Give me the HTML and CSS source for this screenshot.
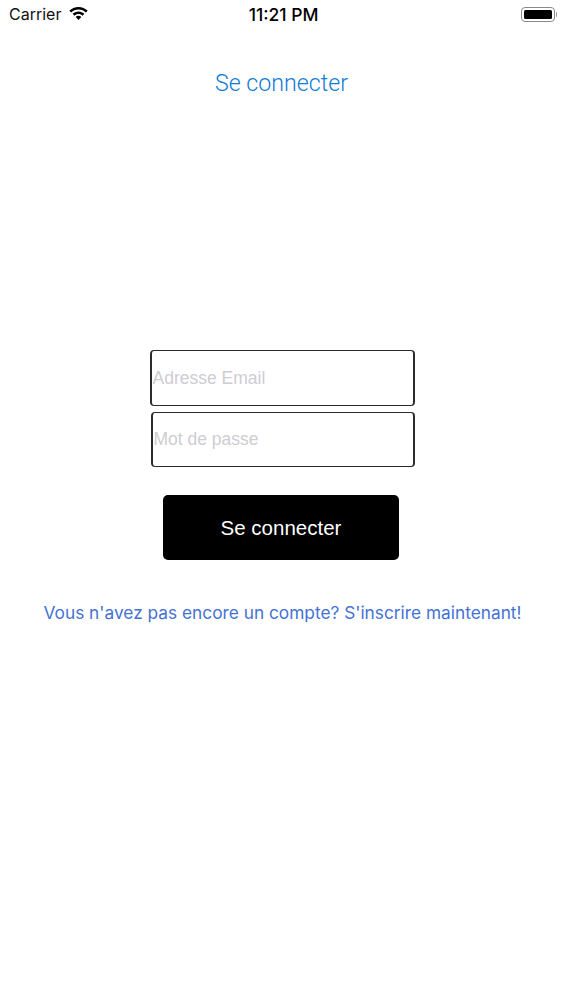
FILE: index.html
```html
<!DOCTYPE html>
<html lang="en">
<head>
    <meta charset="UTF-8">
    <meta name="viewport" content="width=device-width, initial-scale=1.0">
    <title>Se connecter</title>
    <link rel="stylesheet" href="styles.css">
</head>
<body>
    <div class="status-bar">
        <div class="status-left">
            <span class="carrier">Carrier</span>
            <svg class="wifi" width="19" height="14" viewBox="0 0 19 14">
                <path d="M9.5 0C5.9 0 2.7 1.4 .3 3.7l1.8 1.9C4 3.7 6.6 2.6 9.5 2.6s5.5 1.1 7.4 3l1.8-1.9C16.3 1.4 13.1 0 9.5 0z"/>
                <path d="M9.5 4.4c-2.3 0-4.4.9-5.9 2.4l1.8 1.9c1.1-1 2.5-1.7 4.1-1.7s3 .7 4.1 1.7l1.8-1.9c-1.5-1.5-3.6-2.4-5.9-2.4z"/>
                <path d="M9.5 8.8c-1.1 0-2 .4-2.8 1.1l2.8 3.1 2.8-3.1c-.8-.7-1.7-1.1-2.8-1.1z"/>
            </svg>
        </div>
        <span class="clock">11:21 PM</span>
        <div class="battery">
            <div class="battery-body"><div class="battery-level"></div></div>
            <div class="battery-cap"></div>
        </div>
    </div>

    <h1 class="page-title">Se connecter</h1>

    <form class="login-form">
        <input class="field field-email" type="text" placeholder="Adresse Email">
        <input class="field field-password" type="password" placeholder="Mot de passe">
        <button class="login-button" type="button">Se connecter</button>
    </form>

    <a class="signup-link" href="#">Vous n'avez pas encore un compte? S'inscrire maintenant!</a>
</body>
</html>
```

FILE: styles.css
```css
body {
    font-family: "Liberation Sans", Arial, sans-serif;
    margin: 0;
    background-color: #ffffff;
    color: #000000;
}

.status-bar {
    display: flex;
    align-items: center;
    justify-content: space-between;
    position: relative;
    height: 28px;
    padding: 0 6px 0 9px;
    font-family: Inter, "Liberation Sans", sans-serif;
    font-size: 16px;
}

.status-left {
    display: flex;
    align-items: center;
    gap: 8px;
}

.carrier {
    color: #111111;
}

.wifi {
    fill: #000000;
}

.clock {
    position: absolute;
    left: 4px;
    right: 0;
    text-align: center;
    font-weight: 500;
    font-size: 17.5px;
}

.battery {
    display: flex;
    align-items: center;
    gap: 1px;
}

.battery-body {
    box-sizing: border-box;
    width: 33.5px;
    height: 15px;
    padding: 2px;
    border: 1px solid #8a8a8a;
    border-radius: 4px;
}

.battery-level {
    height: 100%;
    background-color: #000000;
    border-radius: 1.5px;
}

.battery-cap {
    width: 1.5px;
    height: 5px;
    background-color: #a0a0a0;
    border-radius: 0 2px 2px 0;
}

.page-title {
    margin: 41px 0 0;
    height: 28px;
    line-height: 28px;
    text-align: center;
    font-family: Roboto, "Liberation Sans", sans-serif;
    font-size: 23.2px;
    font-weight: 300;
    color: #0f7bd4;
}

.login-form {
    display: flex;
    flex-direction: column;
    margin-top: 253px;
}

.field {
    box-sizing: border-box;
    padding: 0 1px 0 0.5px;
    border-style: solid;
    border-width: 1.5px 2px;
    border-color: #2b2b2b;
    border-radius: 4px;
    background-color: #ffffff;
    font-family: "Liberation Sans", Arial, sans-serif;
    font-size: 17.5px;
}

.field::placeholder {
    color: #cfccd2;
    opacity: 1;
}

.field-email {
    width: 265px;
    height: 56px;
    margin-left: 150px;
}

.field-password {
    width: 264px;
    height: 55px;
    padding-bottom: 1px;
    margin: 6px 0 0 151px;
}

.login-button {
    width: 236px;
    height: 65px;
    margin: 27.5px 0 0 163px;
    padding: 2px 0 0;
    border: none;
    border-radius: 5px;
    background-color: #000000;
    color: #ffffff;
    font-family: "Liberation Sans", Arial, sans-serif;
    font-size: 20.5px;
}

.signup-link {
    display: block;
    margin-top: 41.5px;
    padding-left: 2px;
    text-align: center;
    line-height: 24px;
    font-family: Inter, "Liberation Sans", sans-serif;
    font-size: 17.3px;
    color: #4472d4;
    text-decoration: none;
}
```
